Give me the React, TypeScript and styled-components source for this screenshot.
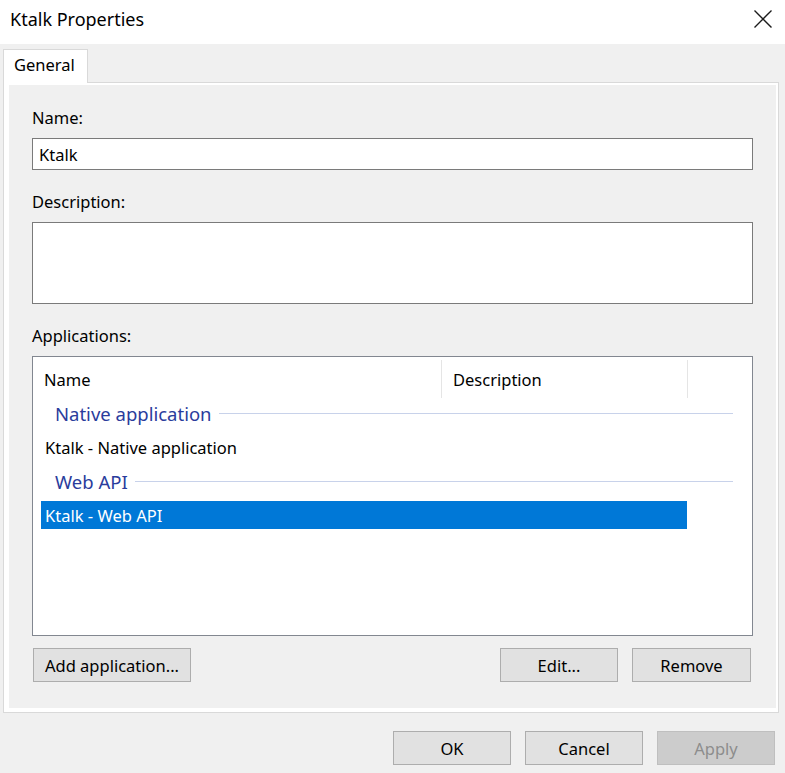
import React, { useState } from 'react';
import styled, { createGlobalStyle } from 'styled-components';

const GlobalStyle = createGlobalStyle`
  html, body {
    margin: 0;
    padding: 0;
    background: #f0f0f0;
  }
  body {
    font-family: 'Noto Sans', 'Liberation Sans', sans-serif;
    color: #000;
  }
  * {
    box-sizing: border-box;
  }
`;

type AppRow =
  | { kind: 'group'; label: string }
  | { kind: 'item'; id: number; name: string; description: string };

const rows: AppRow[] = [
  { kind: 'group', label: 'Native application' },
  { kind: 'item', id: 1, name: 'Ktalk - Native application', description: '' },
  { kind: 'group', label: 'Web API' },
  { kind: 'item', id: 2, name: 'Ktalk - Web API', description: '' },
];

function App() {
  const [name, setName] = useState('Ktalk');
  const [description, setDescription] = useState('');
  const [selectedId, setSelectedId] = useState<number | null>(2);

  return (
    <Window>
      <GlobalStyle />
      <TitleBar>
        <Title>Ktalk Properties</Title>
        <CloseButton aria-label="Close">
          <svg width="20" height="20" viewBox="0 0 20 20">
            <path d="M1.5 1.5 L18.5 18.5 M18.5 1.5 L1.5 18.5" stroke="#1b1b1b" strokeWidth="1.4" fill="none" />
          </svg>
        </CloseButton>
      </TitleBar>

      <Body>
        <TabStrip>
          <Tab>General</Tab>
        </TabStrip>
        <Panel>
          <PanelBody>
            <Label>Name:</Label>
            <TextInput value={name} onChange={(e) => setName(e.target.value)} />

            <Label $top={22}>Description:</Label>
            <TextArea value={description} onChange={(e) => setDescription(e.target.value)} />

            <Label $top={22}>Applications:</Label>
            <ListBox>
              <HeaderRow>
                <HeaderCell $width={409}>Name</HeaderCell>
                <HeaderCell $width={246}>Description</HeaderCell>
              </HeaderRow>
              {rows.map((row, index) =>
                row.kind === 'group' ? (
                  <GroupRow key={index} $first={index === 0}>
                    <GroupLabel>{row.label}</GroupLabel>
                    <GroupLine />
                  </GroupRow>
                ) : (
                  <ItemRow
                    key={index}
                    $selected={selectedId === row.id}
                    onClick={() => setSelectedId(row.id)}
                  >
                    {row.name}
                  </ItemRow>
                ),
              )}
            </ListBox>

            <ListActions>
              <Button $width={158}>Add application...</Button>
              <Spacer />
              <Button $width={118}>Edit...</Button>
              <Button $width={119}>Remove</Button>
            </ListActions>
          </PanelBody>
        </Panel>

        <Footer>
          <Button $width={118}>OK</Button>
          <Button $width={118}>Cancel</Button>
          <Button $width={118} disabled>
            Apply
          </Button>
        </Footer>
      </Body>
    </Window>
  );
}

const Window = styled.div`
  width: 785px;
  height: 773px;
  display: flex;
  flex-direction: column;
  background: #f0f0f0;
  overflow: hidden;
`;

const TitleBar = styled.div`
  height: 44px;
  background: #fff;
  display: flex;
  align-items: center;
  justify-content: space-between;
  padding: 0 12px 6px 10px;
`;

const Title = styled.div`
  font-size: 18px;
  color: #000;
`;

const CloseButton = styled.div`
  width: 20px;
  height: 20px;
  display: flex;
`;

const Body = styled.div`
  flex: 1;
  display: flex;
  flex-direction: column;
  padding: 5px 6px 0 3px;
`;

const TabStrip = styled.div`
  display: flex;
  position: relative;
  z-index: 1;
  margin-bottom: -1px;
`;

const Tab = styled.div`
  width: 85px;
  height: 34px;
  background: #fff;
  border: 1px solid #d9d9d9;
  border-bottom: none;
  padding: 3px 0 0 10px;
  font-size: 16.5px;
`;

const Panel = styled.div`
  height: 631px;
  border: 1px solid #d9d9d9;
  background: #fff;
  padding: 2px 2px 4px 5px;
`;

const PanelBody = styled.div`
  height: 100%;
  background: #f0f0f0;
  display: flex;
  flex-direction: column;
  padding: 23px 23px 0 23px;
`;

const Label = styled.div<{ $top?: number }>`
  font-size: 16.5px;
  line-height: 20px;
  margin-top: ${(p) => p.$top ?? 0}px;
  margin-bottom: 10px;
`;

const TextInput = styled.input`
  height: 32px;
  border: 1px solid #7a7a7a;
  background: #fff;
  padding: 0 6px;
  font: inherit;
  font-size: 16.5px;
  outline: none;
`;

const TextArea = styled.textarea`
  height: 82px;
  border: 1px solid #7a7a7a;
  background: #fff;
  resize: none;
  font: inherit;
  font-size: 16.5px;
  outline: none;
`;

const ListBox = styled.div`
  height: 280px;
  border: 1px solid #828790;
  background: #fff;
  display: flex;
  flex-direction: column;
  padding-top: 3px;
`;

const HeaderRow = styled.div`
  display: flex;
  height: 38px;
`;

const HeaderCell = styled.div<{ $width: number }>`
  width: ${(p) => p.$width}px;
  border-right: 1px solid #e5e5e5;
  display: flex;
  align-items: center;
  padding-left: 11px;
  font-size: 16.5px;
  color: #000;
`;

const GroupRow = styled.div<{ $first: boolean }>`
  height: 30px;
  margin-top: ${(p) => (p.$first ? 0 : 5)}px;
  display: flex;
  align-items: center;
  padding: 0 19px 0 22px;
`;

const GroupLabel = styled.span`
  font-size: 18.5px;
  color: #2a3c9c;
`;

const GroupLine = styled.div`
  flex: 1;
  height: 1px;
  background: #c8d2ea;
  margin-left: 7px;
`;

const ItemRow = styled.div<{ $selected: boolean }>`
  width: 646px;
  height: 28px;
  margin: 5px 0 0 8px;
  padding-left: 4px;
  display: flex;
  align-items: center;
  font-size: 16.5px;
  background: ${(p) => (p.$selected ? '#0078d7' : 'transparent')};
  color: ${(p) => (p.$selected ? '#fff' : '#000')};
  cursor: default;
`;

const ListActions = styled.div`
  display: flex;
  gap: 14px;
  margin-top: 12px;
  padding: 0 2px 0 1px;
`;

const Spacer = styled.div`
  flex: 1;
`;

const Button = styled.button<{ $width: number }>`
  width: ${(p) => p.$width}px;
  height: 34px;
  background: #e1e1e1;
  border: 1px solid #adadad;
  font: inherit;
  font-size: 16.5px;
  color: #000;
  padding: 0;

  &:disabled {
    background: #cccccc;
    border-color: #bfbfbf;
    color: #8d8d8d;
  }
`;

const Footer = styled.div`
  display: flex;
  justify-content: flex-end;
  gap: 14px;
  margin-top: 18px;
  padding-right: 4px;
`;

export default App;
